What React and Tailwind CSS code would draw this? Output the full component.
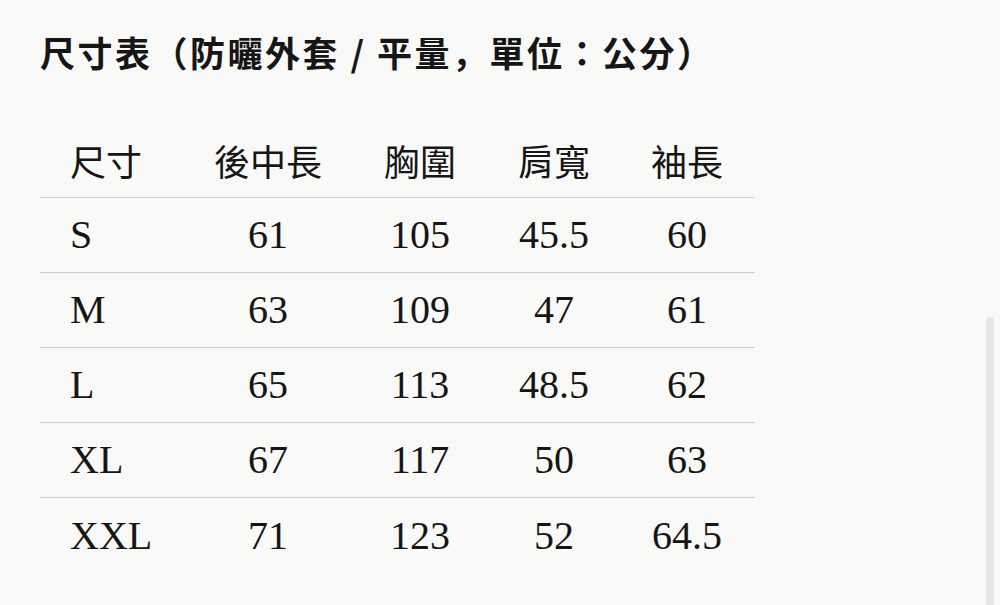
import React from "react";

const rows = [
  ["S", "61", "105", "45.5", "60"],
  ["M", "63", "109", "47", "61"],
  ["L", "65", "113", "48.5", "62"],
  ["XL", "67", "117", "50", "63"],
  ["XXL", "71", "123", "52", "64.5"],
];

const headers = ["尺寸", "後中長", "胸圍", "肩寬", "袖長"];

const cols = "grid grid-cols-[145px_166px_138px_130px_136px]";

const SizeChart = () => {
  return (
    <div className="relative w-[1000px] h-[605px] overflow-hidden bg-[#f9f9f7] text-[#161616]">
      <div className="pt-[27px] px-[40px]">
        <h1 className="text-[35px] leading-[50px] tracking-[2.5px] font-bold font-['Noto_Sans_CJK_JP','Noto_Sans',sans-serif] whitespace-nowrap">
          尺寸表（防曬外套 / 平量，單位：公分）
        </h1>

        {/* size table */}
        <div className="mt-[46px] w-[715px]">
          <div className={`${cols} h-[75px] items-center border-b border-[#cfcfcd]`}>
            {headers.map((h, i) => (
              <div
                key={h}
                className={`text-[36px] leading-[40px] font-['Noto_Sans_CJK_TC',sans-serif] ${
                  i === 0 ? "pl-[30px] text-left" : "text-center"
                }`}
              >
                {h}
              </div>
            ))}
          </div>
          {rows.map((r, ri) => (
            <div
              key={r[0]}
              className={`${cols} h-[75px] items-center ${
                ri < rows.length - 1 ? "border-b border-[#cfcfcd]" : ""
              }`}
            >
              {r.map((c, i) => (
                <div
                  key={i}
                  className={`text-[40px] font-['Liberation_Serif',serif] ${
                    i === 0 ? "pl-[30px] text-left" : "text-center"
                  }`}
                >
                  {c}
                </div>
              ))}
            </div>
          ))}
        </div>
      </div>

      {/* scrollbar thumb */}
      <div className="absolute left-[986px] top-[317px] w-[8px] h-[300px] rounded-t-full bg-[#e7e7e5]" />
    </div>
  );
};

export default function App() {
  return <SizeChart />;
}
